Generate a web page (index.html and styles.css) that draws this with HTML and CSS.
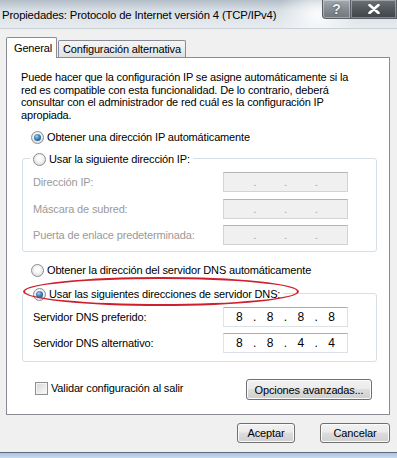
FILE: index.html
```html
<!DOCTYPE html>
<html lang="es">
<head>
    <meta charset="UTF-8">
    <title>Propiedades: Protocolo de Internet versión 4 (TCP/IPv4)</title>
    <link rel="stylesheet" href="styles.css">
</head>
<body>
    <div class="window">
        <div class="titlebar">
            <span class="title">Propiedades: Protocolo de Internet versión 4 (TCP/IPv4)</span>
            <div class="caption-btns">
                <div class="cap-btn help-btn">?</div>
                <div class="cap-btn close-btn">
                    <svg width="12" height="10" viewBox="0 0 12 10"><path d="M1.5 1 L10.5 9 M10.5 1 L1.5 9" stroke="#fff" stroke-width="2.6" stroke-linecap="round"/></svg>
                </div>
            </div>
        </div>

        <div class="dialog">
            <div class="tabs">
                <div class="tab active">General</div>
                <div class="tab">Configuración alternativa</div>
            </div>

            <div class="panel">
                <p class="intro">Puede hacer que la configuración IP se asigne automáticamente si la<br>red es compatible con esta funcionalidad. De lo contrario, deberá<br>consultar con el administrador de red cuál es la configuración IP<br>apropiada.</p>

                <div class="option"><span class="radio checked"></span>Obtener una dirección IP automáticamente</div>

                <div class="group">
                    <div class="legend"><span class="radio"></span>Usar la siguiente dirección IP:</div>
                    <div class="rows">
                        <div class="row disabled">
                            <span>Dirección IP:</span>
                            <div class="ip-box"><span class="octet"></span><span class="dot">.</span><span class="octet"></span><span class="dot">.</span><span class="octet"></span><span class="dot">.</span><span class="octet"></span></div>
                        </div>
                        <div class="row disabled">
                            <span>Máscara de subred:</span>
                            <div class="ip-box"><span class="octet"></span><span class="dot">.</span><span class="octet"></span><span class="dot">.</span><span class="octet"></span><span class="dot">.</span><span class="octet"></span></div>
                        </div>
                        <div class="row disabled">
                            <span>Puerta de enlace predeterminada:</span>
                            <div class="ip-box"><span class="octet"></span><span class="dot">.</span><span class="octet"></span><span class="dot">.</span><span class="octet"></span><span class="dot">.</span><span class="octet"></span></div>
                        </div>
                    </div>
                </div>

                <div class="option option-dns"><span class="radio"></span>Obtener la dirección del servidor DNS automáticamente</div>

                <div class="group dns-group">
                    <div class="legend"><span class="radio checked"></span>Usar las siguientes direcciones de servidor DNS:</div>
                    <div class="rows">
                        <div class="row">
                            <span>Servidor DNS preferido:</span>
                            <div class="ip-box"><span class="octet">8</span><span class="dot">.</span><span class="octet">8</span><span class="dot">.</span><span class="octet">8</span><span class="dot">.</span><span class="octet">8</span></div>
                        </div>
                        <div class="row">
                            <span>Servidor DNS alternativo:</span>
                            <div class="ip-box"><span class="octet">8</span><span class="dot">.</span><span class="octet">8</span><span class="dot">.</span><span class="octet">4</span><span class="dot">.</span><span class="octet">4</span></div>
                        </div>
                    </div>
                </div>

                <div class="panel-footer">
                    <div class="check-option"><span class="checkbox"></span>Validar configuración al salir</div>
                    <button class="btn btn-advanced">Opciones avanzadas...</button>
                </div>

                <div class="highlight"></div>
            </div>

            <div class="actions">
                <button class="btn btn-ok">Aceptar</button>
                <button class="btn btn-cancel">Cancelar</button>
            </div>
        </div>

        <div class="frame-bottom"></div>
    </div>
</body>
</html>
```

FILE: styles.css
```css
body {
    margin: 0;
    font-family: 'Liberation Sans', Arial, sans-serif;
    font-size: 11px;
    letter-spacing: -0.15px;
    color: #000;
    background: #f0f0f0;
}
.window {
    width: 397px;
    height: 458px;
    display: flex;
    flex-direction: column;
    overflow: hidden;
}

/* title bar */
.titlebar {
    height: 29px;
    flex-shrink: 0;
    display: flex;
    align-items: flex-start;
    background:
        radial-gradient(ellipse 40px 30px at 318px 14px, rgba(255,255,255,0.9), rgba(255,255,255,0)),
        linear-gradient(180deg, #b4bec8 0%, #d6dde4 35%, #e7ecf0 100%);
    border-bottom: 1px solid #c9d0d6;
    box-sizing: border-box;
}
.title {
    margin: 7px 0 0 2px;
    line-height: 16px;
    font-size: 11.3px;
    white-space: nowrap;
    color: #000;
}
.caption-btns {
    margin-left: auto;
    display: flex;
}
.cap-btn {
    height: 19px;
    display: flex;
    align-items: center;
    justify-content: center;
    box-sizing: border-box;
    border: 1px solid #5a5f66;
    border-top: none;
    box-shadow: inset 0 0 0 1px rgba(255,255,255,0.35);
}
.help-btn {
    width: 29px;
    border-bottom-left-radius: 4px;
    background: linear-gradient(180deg, #a3a9af 0%, #868c92 50%, #6f757b 100%);
    color: #eef2f5;
    font-weight: bold;
    font-size: 14px;
    text-shadow: 0 0 2px #333;
}
.close-btn {
    width: 46px;
    border-left: none;
    background: linear-gradient(180deg, #6d7277 0%, #52575c 50%, #404449 100%);
}

/* dialog body */
.dialog {
    flex: 1;
    padding: 8px 7px 0 6px;
    display: flex;
    flex-direction: column;
}
.tabs {
    display: flex;
    align-items: flex-end;
    height: 21px;
    position: relative;
    z-index: 1;
}
.tab {
    box-sizing: border-box;
    height: 17px;
    margin-bottom: 1px;
    margin-left: 1px;
    padding: 0 4px;
    border: 1px solid #898c95;
    border-bottom: none;
    border-radius: 2px 2px 0 0;
    background: linear-gradient(180deg, #f5f5f5 0%, #ececec 50%, #e0e0e0 100%);
    display: flex;
    align-items: center;
    white-space: nowrap;
}
.tab.active {
    height: 21px;
    width: 51px;
    margin: 0;
    padding: 0 0 1px 7px;
    background: #fff;
}
.panel {
    position: relative;
    margin-top: -1px;
    background: #fff;
    border: 1px solid #898c95;
    padding: 13px 12px 14px 14px;
}
.intro {
    margin: 0;
    line-height: 12.6px;
}
.option {
    height: 20px;
    margin: 6px 0 0 10px;
    display: flex;
    align-items: center;
}
.option-dns {
    margin-top: 8px;
}
.radio {
    width: 13px;
    height: 13px;
    box-sizing: border-box;
    border-radius: 50%;
    border: 1px solid #8a8c8e;
    background: radial-gradient(circle at 50% 40%, #ffffff 20%, #e3e3e3 70%, #cfcfcf 100%);
    margin-right: 3px;
    display: flex;
    align-items: center;
    justify-content: center;
    flex-shrink: 0;
}
.radio.checked::after {
    content: "";
    width: 7px;
    height: 7px;
    border-radius: 50%;
    background: radial-gradient(circle at 40% 35%, #9fd0f2 0%, #3a7fb6 45%, #154a75 100%);
}

/* group boxes */
.group {
    margin: 11px 0 0 1px;
    border: 1px solid #d5dfe5;
    border-radius: 3px;
    padding: 0 28px 6px 10px;
}
.dns-group {
    margin-top: 13px;
    padding-bottom: 8px;
}
.legend {
    display: flex;
    align-items: center;
    width: fit-content;
    height: 20px;
    margin: -10px 0 0 -3px;
    padding: 0 3px;
    background: #fff;
}
.rows {
    margin-top: 3px;
    display: flex;
    flex-direction: column;
    gap: 6.5px;
}
.dns-group .rows {
    gap: 6px;
}
.row {
    height: 20px;
    display: flex;
    align-items: center;
    justify-content: space-between;
}
.row.disabled {
    color: #9a9a9a;
}
.ip-box {
    width: 125px;
    height: 20px;
    box-sizing: border-box;
    border: 1px solid #dbdfe6;
    border-top-color: #abadb3;
    border-left-color: #e2e3ea;
    background: #fff;
    display: flex;
    align-items: center;
    font-size: 12px;
    letter-spacing: 0;
}
.row.disabled .ip-box {
    background: #f0f0f0;
    border-color: #d3d3d3;
    border-top-color: #b4b4b4;
    font-size: 11px;
}
.octet {
    flex: 1;
    text-align: center;
}
.dot {
    width: 0;
    display: flex;
    justify-content: center;
}

/* footer of panel */
.panel-footer {
    margin-top: 17px;
    height: 21px;
    display: flex;
    align-items: flex-start;
    justify-content: space-between;
}
.check-option {
    display: flex;
    align-items: center;
    margin: 1px 0 0 14px;
    height: 16px;
}
.checkbox {
    width: 13px;
    height: 13px;
    box-sizing: border-box;
    border: 1px solid #8e8f8f;
    background: linear-gradient(135deg, #d6d6d6 0%, #ececec 60%, #fbfbfb 100%);
    box-shadow: inset 0 0 0 1px #f4f4f4;
    margin-right: 3px;
}
.btn {
    font-family: inherit;
    font-size: 11px;
    letter-spacing: -0.15px;
    color: #000;
    height: 21px;
    padding: 0;
    border: 1px solid #707070;
    border-radius: 3px;
    background: linear-gradient(180deg, #f2f2f2 0%, #ebebeb 45%, #dddddd 50%, #cfcfcf 100%);
    box-shadow: inset 0 0 0 1px #fbfbfb;
}
.btn-advanced {
    width: 126px;
    margin-right: 5px;
}
.highlight {
    position: absolute;
    left: 16px;
    top: 219px;
    width: 276px;
    height: 29px;
    box-sizing: border-box;
    border: 2.5px solid #cf1f2c;
    border-radius: 50%;
}

/* dialog buttons */
.actions {
    margin-top: 8px;
    display: flex;
    justify-content: flex-end;
    gap: 25px;
}
.actions .btn {
    height: 20px;
}
.btn-ok {
    width: 58px;
}
.btn-cancel {
    width: 70px;
}
.frame-bottom {
    height: 6px;
    flex-shrink: 0;
    border-top: 1px solid #5b6b7d;
    background: linear-gradient(180deg, #a9c3e0, #c9dbef);
    box-sizing: border-box;
}
```
